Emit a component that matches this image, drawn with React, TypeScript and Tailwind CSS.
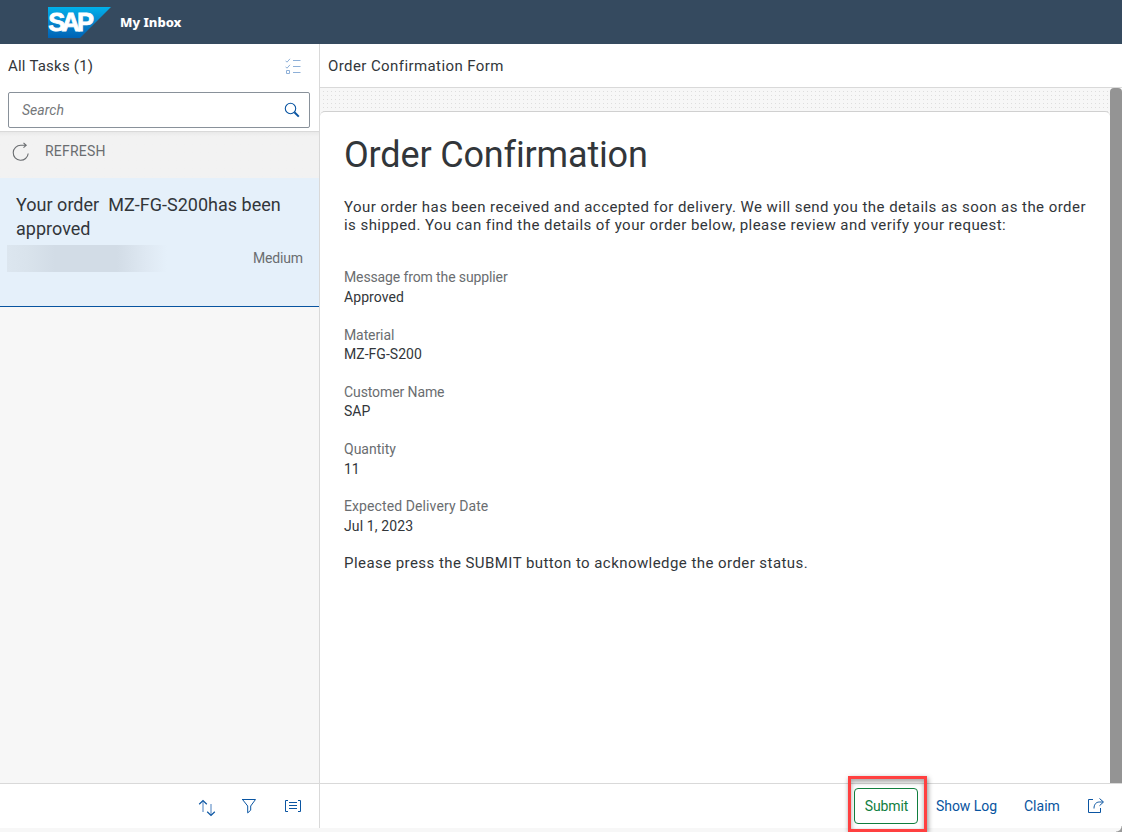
const details = [
  { label: "Message from the supplier", value: "Approved", track: "tracking-[-0.12px]", vtrack: "tracking-[0.08px]", lead: "leading-5", gap: "h-[58px]" },
  { label: "Material", value: "MZ-FG-S200", track: "tracking-[-0.1px]", vtrack: "tracking-[0.03px]", lead: "-mb-px leading-5", gap: "h-[57px]" },
  { label: "Customer Name", value: "SAP", track: "tracking-[-0.1px]", vtrack: "tracking-[0px]", lead: "-mb-px leading-5", gap: "h-[57px]" },
  { label: "Quantity", value: "11", track: "tracking-[0px]", vtrack: "tracking-[0px]", lead: "leading-5", gap: "h-[57px]" },
  { label: "Expected Delivery Date", value: "Jul 1, 2023", track: "tracking-[0.1px]", vtrack: "tracking-[0.12px]", lead: "leading-5", gap: "h-[47px]" },
];

function SapLogo() {
  return (
    <svg width="63" height="31" viewBox="0 0 63 31" className="block shrink-0" role="img">
      <defs>
        <linearGradient id="sap" x1="0" y1="0" x2="0" y2="1">
          <stop offset="0" stopColor="#00b1eb" />
          <stop offset="0.5" stopColor="#0785cc" />
          <stop offset="1" stopColor="#0063b5" />
        </linearGradient>
      </defs>
      <path d="M0 0H63L32 31H0Z" fill="url(#sap)" />
      <text x="0.2 13.4 29" y="24.3" fontFamily="Liberation Sans, sans-serif" fontWeight="bold" fontSize="25.5" fill="#fff" stroke="#fff" strokeWidth="0.8">SAP</text>
    </svg>
  );
}

function Header() {
  return (
    <header className="flex h-11 shrink-0 items-center bg-[#354a5f] pl-12">
      <SapLogo />
      <h1 className="ml-[9px] mt-[2px] font-['Noto_Sans'] text-[13px] font-extrabold text-white">My Inbox</h1>
    </header>
  );
}

function TaskList() {
  return (
    <aside className="flex w-80 shrink-0 flex-col border-r border-[#d9d9d9] bg-[#f7f7f7]">
      <div className="h-[88px] shrink-0 border-b border-[#d9d9d9] bg-white px-2">
        <div className="flex h-12 items-start justify-between pt-3">
          <h2 className="text-[15px] leading-5 tracking-[0.22px]">All Tasks (1)</h2>
          <svg width="16" height="16" viewBox="0 0 16 16" fill="none" stroke="#8eb0d8" className="mr-[10px] mt-[2px]">
            <path d="M.5 2.7 2 4.2 5 .8M.5 8.7 2 10.2 5 6.8M1.5 12.5h3v3h-3zM8 2.5H15.5M8 8.5H15.5M8 14.5H15.5" />
          </svg>
        </div>
        <div className="flex h-9 w-[302px] items-center justify-between rounded-[2px] border border-[#89919a] pl-[13px] pr-[9px]">
          <span className="text-sm italic tracking-[0.05px] text-[#74777a]">Search</span>
          <svg width="16" height="16" viewBox="0 0 16 16" fill="none" stroke="#0a55a2">
            <circle cx="6.5" cy="6.5" r="5.2" strokeWidth="1.1" />
            <path d="m10.4 10.3 4.4 4.3" strokeWidth="2" />
          </svg>
        </div>
      </div>
      <div className="flex h-[46px] shrink-0 items-start bg-gradient-to-b from-[#e9e9e9] from-0% via-[#f2f2f2] via-10% to-[#f2f2f2] pl-3 pt-[9px] text-[#6a6d70]">
        <svg width="18" height="20" viewBox="0 0 18 20" fill="none" stroke="#6a6d70" strokeWidth="1.1" className="mt-[1px]">
          <path d="M16.2 11.5A7.5 7.5 0 1 1 8.8 3.3H14M11.5.9 14.2 3.3 11.5 5.7" />
        </svg>
        <span className="ml-[15px] text-sm leading-5 tracking-[0.2px]">REFRESH</span>
      </div>
      <article className="h-[129px] shrink-0 border-b border-[#0854a0] bg-[#e5f0fa]">
        <h3 className="whitespace-pre pl-4 pt-[15px] text-[18px] leading-6 tracking-[0.02px]">{"Your order  MZ-FG-S200has been\napproved"}</h3>
        <div className="ml-[7px] mt-[4px] flex h-[27px] items-center justify-end bg-[linear-gradient(90deg,#dce6ef_0,#d9e3ec_20px,#d2dce6_48px,#d2dce6_110px,#dee8f2_138px,#e5f0fa_160px)] pb-px pr-4">
          <span className="text-sm tracking-[-0.15px] text-[#6a6d70]">Medium</span>
        </div>
      </article>
      <div className="flex-1" />
      <footer className="flex h-[45px] shrink-0 items-center gap-7 border-t border-[#d9d9d9] bg-white pl-[198px]">
        <svg width="18" height="18" viewBox="0 0 18 18" fill="none" stroke="#0a55a2" className="mt-[3px]">
          <path d="M5 2v11M13 5v11" stroke="#8eb0d8" strokeWidth="1.6" />
          <path d="M1.2 5.2 5 1.5l3.8 3.7M9.2 12.8l3.8 3.7 3.8-3.7" strokeWidth="1.2" />
        </svg>
        <svg width="16" height="16" viewBox="0 0 16 16" fill="none" stroke="#0a55a2" className="-ml-[3px]">
          <path d="M1 1.5h13.5L9.7 8v4.2l-3 2.7V8L1.5 1.5" />
        </svg>
        <svg width="18" height="16" viewBox="0 0 18 16" fill="none" stroke="#0a55a2" className="-ml-px">
          <path d="M4 2.5H1.5v11H4M14 2.5h2.5v11H14M5 4.5h8M5 7.5h8M5 10.5h8" />
        </svg>
      </footer>
    </aside>
  );
}

function ConfirmationForm() {
  return (
    <div className="flex min-h-0 flex-1">
      <div className="flex flex-1 flex-col bg-[#f7f7f7] bg-[radial-gradient(circle_at_3.5px_3.5px,#dedede_0.6px,transparent_0.65px)] bg-[size:4px_4px] pt-[23px]">
        <div className="flex-1 rounded-t-[5px] border-t border-[#d0d0d0] bg-white pl-6 pt-5">
          <h2 className="text-[36px] leading-[46px] tracking-[-0.16px]">Order Confirmation</h2>
          <p className="mt-5 whitespace-pre text-[15px] leading-[18px] tracking-[0.45px]">
            {"Your order has been received and accepted for delivery. We will send you the details as soon as the order\nis shipped. You can find the details of your order below, please review and verify your request:"}
          </p>
          <dl className="mt-[33px]">
            {details.map((d) => (
              <div key={d.label} className={d.gap}>
                <dt className={`text-sm text-[#6a6d70] ${d.lead} ${d.track}`}>{d.label}</dt>
                <dd className={`text-sm leading-5 ${d.vtrack}`}>{d.value}</dd>
              </div>
            ))}
          </dl>
          <p className="mt-[11px] text-[15px] leading-[18px] tracking-[0.44px]">Please press the SUBMIT button to acknowledge the order status.</p>
        </div>
      </div>
      <div className="w-3 shrink-0 rounded-t-[4px] bg-[#949494]" />
    </div>
  );
}

function Actions() {
  return (
    <footer className="relative flex h-[45px] shrink-0 items-center border-t border-[#d9d9d9] bg-white pl-[534px] text-sm text-[#0854a0]">
      <div className="pointer-events-none absolute -top-[8px] left-[528px] h-[56px] w-[79px] border-[3px] border-[#ff4040] shadow-[1px_2px_5px_rgba(0,0,0,0.45),inset_0_3px_5px_rgba(0,0,0,0.35)]" />
      <button className="relative h-9 w-16 rounded-[4px] border border-[#107e3e] bg-white pl-px tracking-[-0.15px] text-[#107e3e]">Submit</button>
      <button className="ml-[18px] w-[61px] whitespace-nowrap text-left tracking-[-0.05px]">Show Log</button>
      <button className="ml-[27px] w-9 text-left">Claim</button>
      <svg width="18" height="18" viewBox="0 0 18 18" fill="none" stroke="#0a55a2" className="ml-[27px]">
        <path d="M6 2.5H1.5v13h12V11M12.5 1.5l4 3.5-4 3.7M16 5h-3.5C9 5 7 7.4 7 11.5" />
      </svg>
    </footer>
  );
}

export default function App() {
  return (
    <div className="relative flex h-[832px] w-[1122px] flex-col overflow-hidden bg-[#f7f7f7] font-[Roboto,sans-serif] text-[#32363a]">
      <Header />
      <div className="flex h-[784px] shrink-0">
        <TaskList />
        <main className="flex min-w-0 flex-1 flex-col bg-white">
          <div className="h-11 shrink-0 border-b border-[#d9d9d9] pl-2 pt-3 text-[15px] leading-5 tracking-[0.41px]">Order Confirmation Form</div>
          <ConfirmationForm />
          <Actions />
        </main>
      </div>
      <div className="pointer-events-none absolute bottom-0 right-0 size-[6px] bg-[radial-gradient(circle_at_0_0,transparent_5px,#9a9a9a_6px)]" />
    </div>
  );
}
